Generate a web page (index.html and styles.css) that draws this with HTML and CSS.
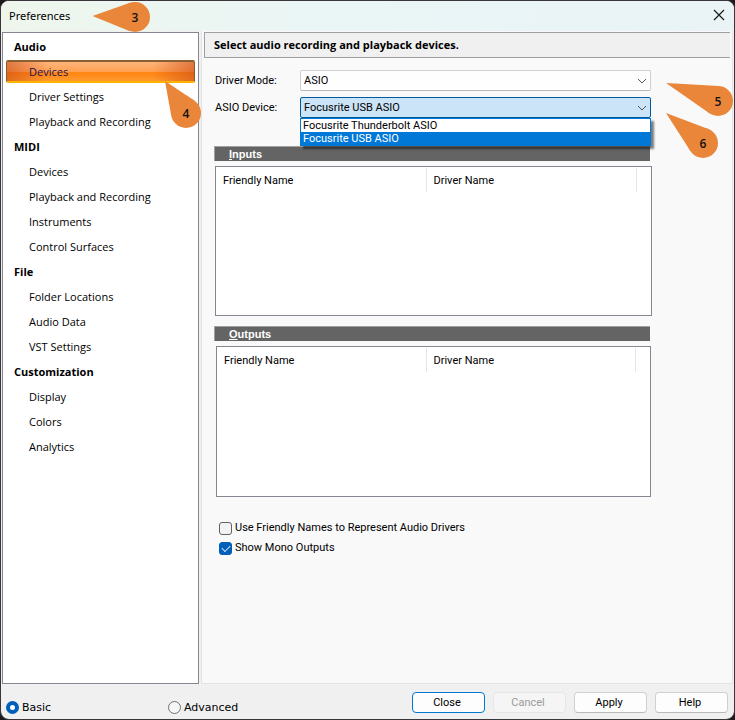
FILE: index.html
```html
<!DOCTYPE html>
<html lang="en">
<head>
<meta charset="utf-8">
<title>Preferences</title>
<link rel="stylesheet" href="styles.css">
</head>
<body>
<div class="window">
  <header class="titlebar">
    <h1>Preferences</h1>
    <button class="close" type="button" aria-label="Close window">
      <svg width="12" height="12" viewBox="0 0 12 12"><path d="M1 1l10 10M11 1L1 11" fill="none" stroke="#1a1a1a" stroke-width="1.2"/></svg>
    </button>
  </header>

  <div class="body">
    <nav class="tree">
      <h2>Audio</h2>
      <a class="selected" href="#devices">Devices</a>
      <a href="#driver">Driver Settings</a>
      <a href="#playback">Playback and Recording</a>
      <h2>MIDI</h2>
      <a href="#midi-devices">Devices</a>
      <a href="#midi-playback">Playback and Recording</a>
      <a href="#instruments">Instruments</a>
      <a href="#surfaces">Control Surfaces</a>
      <h2>File</h2>
      <a href="#folders">Folder Locations</a>
      <a href="#audio-data">Audio Data</a>
      <a href="#vst">VST Settings</a>
      <h2>Customization</h2>
      <a href="#display">Display</a>
      <a href="#colors">Colors</a>
      <a href="#analytics">Analytics</a>
    </nav>

    <main class="page">
      <h2 class="heading">Select audio recording and playback devices.</h2>
      <div class="settings">
        <div class="row">
          <label for="mode">Driver Mode:</label>
          <div class="combo">
            <select id="mode"><option>ASIO</option></select>
            <svg class="chevron" width="12" height="8" viewBox="0 0 12 8"><path d="M2 2l4 4 4-4" fill="none" stroke="#555" stroke-width="1"/></svg>
          </div>
        </div>
        <div class="row">
          <label for="device">ASIO Device:</label>
          <div class="combo open">
            <select id="device"><option>Focusrite USB ASIO</option><option>Focusrite Thunderbolt ASIO</option></select>
            <svg class="chevron" width="12" height="8" viewBox="0 0 12 8"><path d="M2 2l4 4 4-4" fill="none" stroke="#555" stroke-width="1"/></svg>
            <ul class="popup" role="listbox" aria-label="ASIO Device">
              <li role="option">Focusrite Thunderbolt ASIO</li>
              <li role="option" aria-selected="true">Focusrite USB ASIO</li>
            </ul>
          </div>
        </div>

        <h3 class="bar"><u>I</u>nputs</h3>
        <div class="list inputs">
          <table><thead><tr><th>Friendly Name</th><th>Driver Name</th><th class="rest"></th></tr></thead></table>
        </div>
        <h3 class="bar"><u>O</u>utputs</h3>
        <div class="list outputs">
          <table><thead><tr><th>Friendly Name</th><th>Driver Name</th><th class="rest"></th></tr></thead></table>
        </div>

        <div class="checks">
          <label><input type="checkbox">Use Friendly Names to Represent Audio Drivers</label>
          <label><input type="checkbox" checked>Show Mono Outputs</label>
        </div>
      </div>
    </main>
  </div>

  <footer class="footer">
    <div class="levels">
      <label><input type="radio" name="level" checked>Basic</label>
      <label><input type="radio" name="level">Advanced</label>
    </div>
    <div class="buttons">
      <button class="default" type="button">Close</button>
      <button type="button" disabled>Cancel</button>
      <button type="button">Apply</button>
      <button type="button">Help</button>
    </div>
  </footer>

  <svg class="callout c3" width="60" height="32" viewBox="92 1 60 32"><path d="M92.500 16L130 2.800L129.400 30.900Z"/><circle cx="135" cy="17" r="15"/><text x="135" y="22">3</text></svg>
  <svg class="callout c4" width="38" height="50" viewBox="164 80 38 50"><path d="M165 81L194.300 100.500L171.200 115.600Z"/><path d="M194.300 100.500L186 113L171.200 115.600Z"/><circle cx="186" cy="113" r="15"/><text x="186" y="118">4</text></svg>
  <svg class="callout c5" width="69" height="36" viewBox="665 82 69 36"><path d="M666 83L718.900 86L709.400 113.300Z"/><circle cx="718" cy="101" r="15"/><text x="718" y="106">5</text></svg>
  <svg class="callout c6" width="54" height="48" viewBox="665 112 54 48"><path d="M666 113L708.300 129L690.400 151.100Z"/><circle cx="703" cy="143" r="15"/><text x="703" y="148">6</text></svg>
</div>
</body>
</html>
```

FILE: styles.css
```css
* { box-sizing: border-box; }

body {
  margin: 0;
  background: #1d1a1e;
  color: #000;
  font: 11px/14px Roboto, "Liberation Sans", sans-serif;
}

h1, h2, h3, ul { margin: 0; padding: 0; font-size: inherit; }
button, select, input { font: inherit; color: inherit; margin: 0; }

.window {
  position: relative;
  display: flex;
  flex-direction: column;
  min-height: 100vh;
  border: 1px solid #39353a;
  border-radius: 9px;
  background: #f0f0f0;
  overflow: hidden;
}

.titlebar {
  display: flex;
  align-items: center;
  justify-content: space-between;
  height: 30px;
  padding: 0 9px 2px 8px;
  background: linear-gradient(90deg, #eef6ec, #eaf5f6 45%, #eaf4f7);
}
.titlebar h1 { padding-top: 2px; font: 11px/16px "Noto Sans", sans-serif; }
.close {
  display: flex;
  padding: 0;
  border: 0;
  background: none;
}

.body {
  flex: 1;
  display: grid;
  grid-template-columns: 197px minmax(0, 1fr);
  gap: 2px;
  padding: 0 1px;
}

.tree {
  margin-top: 1px;
  padding: 1px 3px;
  border: 1px solid #828790;
  background: #fff;
  font: 11px/25px "Open Sans", sans-serif;
}
.tree h2 { padding-left: 8px; font-weight: 700; }
.tree a {
  display: block;
  height: 25px;
  padding-left: 23px;
  color: #000;
  text-decoration: none;
}
.tree .selected {
  height: 23px;
  margin: 1px 0;
  padding-left: 22px;
  border: 1px solid #80602c;
  border-top: 2px solid #8a6032;
  border-bottom: 2px solid #ffb400;
  border-radius: 2px;
  line-height: 20px;
  color: #1a1050;
  background:
    linear-gradient(90deg, rgba(200, 70, 20, .55), transparent 22%, transparent 78%, rgba(200, 70, 20, .55)),
    linear-gradient(#ffb57c, #ffa052 50%, #ff8410 56%, #ff9a30);
}

.page {
  border: 1px solid #e3e3e3;
  border-top: 0;
  background: #f9f9f9;
}
.heading {
  margin: 1px 2px 0;
  padding: 0 9px;
  border: 1px solid #a0a0a0;
  border-right: 0;
  background: #f0f0f0;
  font: 700 11px/24px "Open Sans", sans-serif;
}

.settings { padding: 12px 80px 0 12px; }
.row {
  display: grid;
  grid-template-columns: 85px minmax(0, 1fr);
  align-items: center;
  height: 21px;
  margin: 0 1px 6px;
}
.combo { position: relative; }
.combo select {
  appearance: none;
  display: block;
  width: 100%;
  height: 21px;
  padding: 0 3px;
  border: 1px solid #d0d0d0;
  border-bottom-color: #b8b8b8;
  border-radius: 2px;
  background: #fefefe;
}
.combo.open select { border-color: #005a9e; background: #cce4f7; }
.chevron { position: absolute; right: 3px; top: 7px; }
.popup {
  position: absolute;
  z-index: 1;
  top: 21px;
  left: 0;
  right: 0;
  border: 1px solid #0078d7;
  background: #fff;
  box-shadow: 3px 3px 2px rgba(0, 0, 0, .5);
  line-height: 14px;
  list-style: none;
}
.popup li { height: 13px; padding: 0 2px; }
.popup [aria-selected] { background: #0078d7; color: #fff; }

.bar {
  margin: 28px 2px 5px 0;
  padding-left: 14px;
  border-top: 1px solid #a0a0a0;
  border-left: 1px solid #a0a0a0;
  background: #646464;
  color: #fff;
  font: 700 11px/14px "Liberation Sans", sans-serif;
}
.list {
  border: 1px solid #828790;
  background: #fff;
}
.inputs { height: 150px; margin: 0 0 0 1px; }
.outputs { height: 151px; margin: 0 1px 0 2px; }
.list + .bar { margin-top: 10px; }
.list table {
  width: 100%;
  margin-top: 1px;
  border-collapse: collapse;
  table-layout: fixed;
}
.list th {
  height: 24px;
  padding: 2px 7px 0;
  border-right: 1px solid #e5e5e5;
  font-weight: 400;
  text-align: left;
}
.list .rest { width: 15px; padding: 0; border: 0; }

.checks { padding: 21px 0 0 5px; }
.checks label {
  display: flex;
  align-items: center;
  gap: 3px;
  height: 20px;
}
.checks input {
  appearance: none;
  width: 13px;
  height: 13px;
  border: 1px solid #626262;
  border-radius: 3px;
  background: #f3f3f3;
}
.checks input:checked {
  display: grid;
  place-items: center;
  border-color: #005fb8;
  background: #005fb8;
}
.checks input:checked::before {
  content: "";
  width: 7px;
  height: 4px;
  margin-bottom: 2px;
  border: solid #d6e6f5;
  border-width: 0 0 1px 1px;
  transform: rotate(-45deg);
}

.footer {
  display: flex;
  align-items: flex-start;
  justify-content: space-between;
  height: 35px;
  padding: 8px 6px 0 5px;
}
.levels {
  display: grid;
  grid-template-columns: 162px auto;
  padding-top: 8px;
  font: 11px/15px "DejaVu Sans", sans-serif;
}
.levels label { display: flex; align-items: center; gap: 3px; }
.levels input {
  appearance: none;
  width: 13px;
  height: 13px;
  border: 1px solid #707070;
  border-radius: 50%;
  background: #f6f6f6;
}
.levels input:checked { border: 4px solid #005fb8; background: #fff; }
.buttons { display: flex; gap: 8px; }
.buttons button {
  width: 73px;
  height: 21px;
  padding: 0 3px 0 0;
  border: 1px solid #d0d0d0;
  border-bottom-color: #bababa;
  border-radius: 4px;
  background: #fdfdfd;
}
.buttons .default { border-color: #0078d4; }
.buttons button:disabled {
  border-color: #e6e6e6;
  background: #f5f5f5;
  color: #9a9a9a;
}

.callout { position: absolute; z-index: 2; fill: #e98639; }
.callout text {
  fill: #111;
  font: 600 12px "Open Sans", sans-serif;
  text-anchor: middle;
}
.c3 { left: 91px; top: 0; }
.c4 { left: 163px; top: 79px; }
.c5 { right: 0; top: 81px; }
.c6 { right: 15px; top: 111px; }
```
